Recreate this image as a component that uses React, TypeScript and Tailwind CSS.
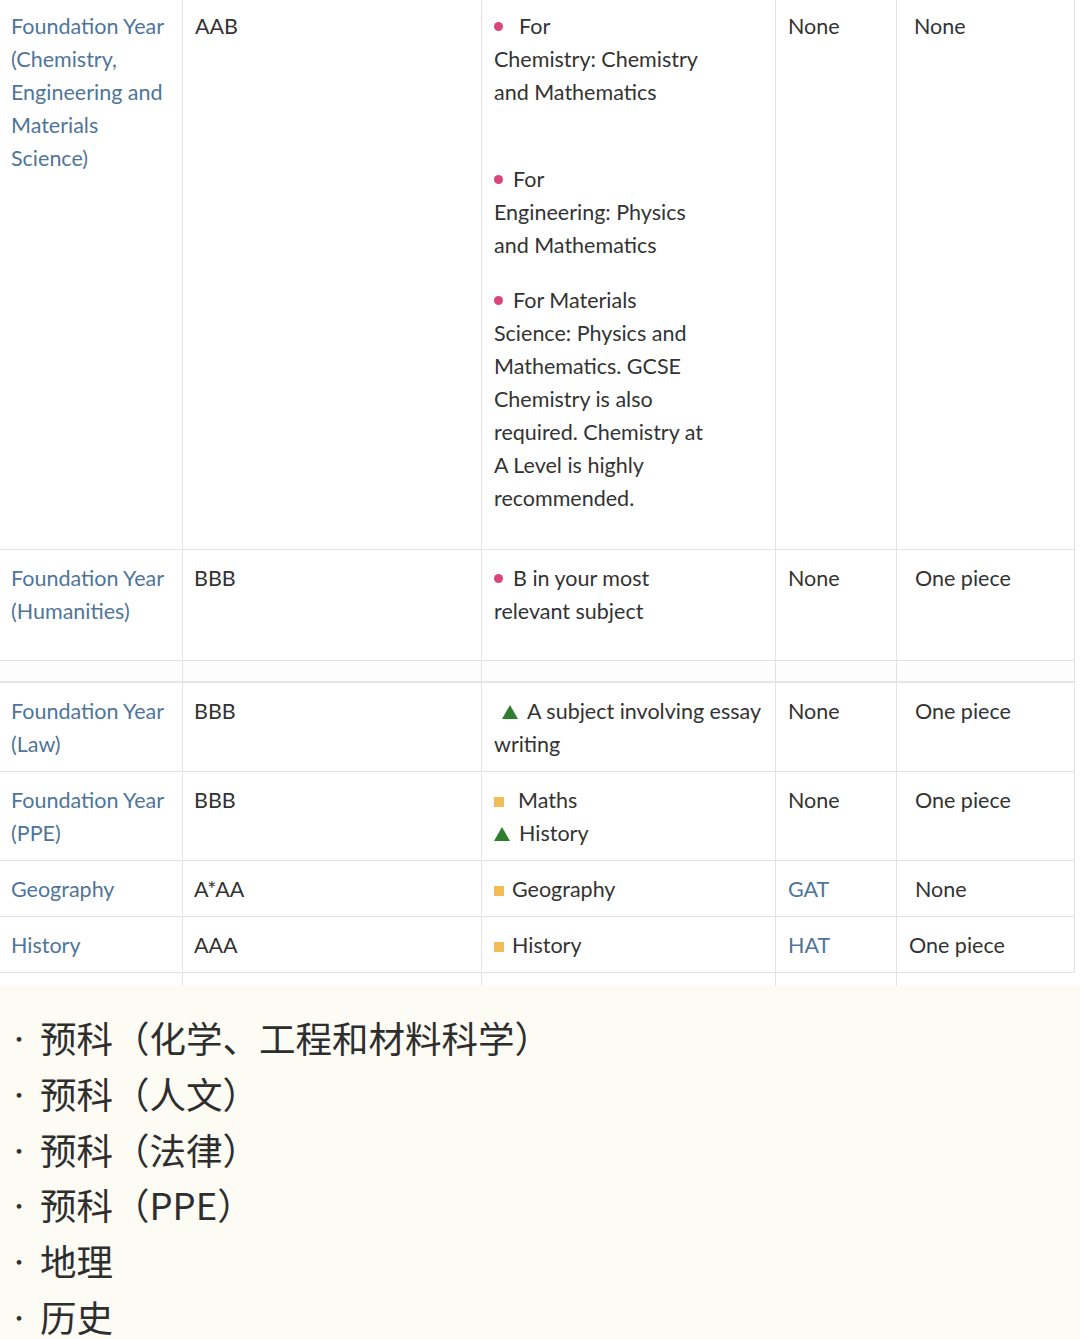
import type { ReactNode } from 'react'

const cols = 'grid grid-cols-[183px_299px_294px_121px_178px] w-[1075px]'
const cell = 'border-r border-[#e3e3e3] px-[11px]'

function Dot() {
    return <span className="inline-block w-[9px] h-[9px] rounded-full bg-[#d8457a] mr-[10px] align-middle relative -top-[2px]" />
}

function Square() {
    return <span className="inline-block w-[10px] h-[10px] bg-[#f2bd55] mr-[8px] align-middle relative -top-[1px]" />
}

function Triangle() {
    return (
        <svg width="16" height="14" viewBox="0 0 16 14" className="inline-block mr-[9px] align-middle relative -top-[2px]">
            <polygon points="8,0 16,14 0,14" fill="#2f7d2f" />
        </svg>
    )
}

function Link({ children }: { children: ReactNode }) {
    return <span className="text-[#4f7599]">{children}</span>
}

type Row = {
    name: ReactNode
    grade: string
    subjects: ReactNode
    test: ReactNode
    work: string
    pad?: string
    workPad?: string
}

const rows: Row[] = [
    {
        name: (
            <>
                Foundation Year
                <br />
                (Humanities)
            </>
        ),
        grade: 'BBB',
        subjects: (
            <>
                <Dot />B in your most
                <br />
                relevant subject
            </>
        ),
        test: 'None',
        work: 'One piece',
        pad: 'pt-[12px] pb-[32px]',
    },
]

const lowerRows: Row[] = [
    {
        name: (
            <>
                Foundation Year
                <br />
                (Law)
            </>
        ),
        grade: 'BBB',
        subjects: (
            <>
                <span className="pl-[8px]" />
                <Triangle />A subject involving essay
                <br />
                writing
            </>
        ),
        test: 'None',
        work: 'One piece',
    },
    {
        name: (
            <>
                Foundation Year
                <br />
                (PPE)
            </>
        ),
        grade: 'BBB',
        subjects: (
            <>
                <Square />
                <span className="pl-[6px]">Maths</span>
                <br />
                <Triangle />History
            </>
        ),
        test: 'None',
        work: 'One piece',
    },
    {
        name: 'Geography',
        grade: 'A*AA',
        subjects: (
            <>
                <Square />Geography
            </>
        ),
        test: <Link>GAT</Link>,
        work: 'None',
    },
    {
        name: 'History',
        grade: 'AAA',
        subjects: (
            <>
                <Square />History
            </>
        ),
        test: <Link>HAT</Link>,
        work: 'One piece',
        workPad: 'pl-[12px]',
    },
]

function TableRow({ r }: { r: Row }) {
    const pad = r.pad ?? 'pt-[12px] pb-[10px]'
    return (
        <div className={`${cols} border-b border-[#e3e3e3]`}>
            <div className={`${cell} ${pad} px-[10px]`}>
                <Link>{r.name}</Link>
            </div>
            <div className={`${cell} ${pad}`}>{r.grade}</div>
            <div className={`${cell} ${pad} px-[12px]`}>{r.subjects}</div>
            <div className={`${cell} ${pad} px-[12px]`}>{r.test}</div>
            <div className={`${cell} ${pad} ${r.workPad ?? 'pl-[18px]'}`}>{r.work}</div>
        </div>
    )
}

const zh = [
    '预科（化学、工程和材料科学）',
    '预科（人文）',
    '预科（法律）',
    '预科（PPE）',
    '地理',
    '历史',
]

export default function App() {
    return (
        <div className="w-[1080px] h-[1339px] overflow-hidden bg-white">
            <div className="font-['Lato','Liberation_Sans',sans-serif] text-[21.5px] leading-[33px] text-[#333333]">
                {/* first block */}
                <div className={`${cols} border-b border-[#e3e3e3]`}>
                    <div className={`${cell} pt-[10px] h-[549px]`}>
                        <Link>
                            Foundation Year
                            <br />
                            (Chemistry,
                            <br />
                            Engineering and
                            <br />
                            Materials
                            <br />
                            Science)
                        </Link>
                    </div>
                    <div className={`${cell} pt-[10px] px-[12px]`}>AAB</div>
                    <div className={`${cell} pt-[10px] px-[12px]`}>
                        <p>
                            <Dot />
                            <span className="pl-[6px]">For</span>
                            <br />
                            Chemistry: Chemistry
                            <br />
                            and Mathematics
                            <br />
                            &nbsp;
                        </p>
                        <p className="mt-[21px]">
                            <Dot />For
                            <br />
                            Engineering: Physics
                            <br />
                            and Mathematics
                        </p>
                        <p className="mt-[22px]">
                            <Dot />For Materials
                            <br />
                            Science: Physics and
                            <br />
                            Mathematics. GCSE
                            <br />
                            Chemistry is also
                            <br />
                            required. Chemistry at
                            <br />
                            A Level is highly
                            <br />
                            recommended.
                        </p>
                    </div>
                    <div className={`${cell} pt-[10px] px-[12px]`}>None</div>
                    <div className={`${cell} pt-[10px] pl-[17px]`}>None</div>
                </div>

                {rows.map((r, i) => (
                    <TableRow key={i} r={r} />
                ))}

                {/* seam strip */}
                <div className={`${cols} h-[22px] border-b-2 border-[#e6e6e6] bg-[#fdfdfd]`}>
                    <div className={cell} />
                    <div className={cell} />
                    <div className={cell} />
                    <div className={cell} />
                    <div className={cell} />
                </div>

                {lowerRows.map((r, i) => (
                    <TableRow key={i} r={r} />
                ))}

                <div className={`${cols} h-[13px]`}>
                    <div className={cell} />
                    <div className={cell} />
                    <div className={cell} />
                    <div className={cell} />
                    <div />
                </div>
            </div>

            <div className="bg-[#fcfbf4] h-[400px] pt-[24px] font-['Noto_Sans_CJK_SC',sans-serif] text-[36.5px] leading-[55.8px] text-[#2e2e2e]">
                {zh.map((t) => (
                    <div key={t} className="flex">
                        <span className="w-[40px] pl-[8px] text-[22px]">·</span>
                        <span>{t}</span>
                    </div>
                ))}
            </div>
        </div>
    )
}
